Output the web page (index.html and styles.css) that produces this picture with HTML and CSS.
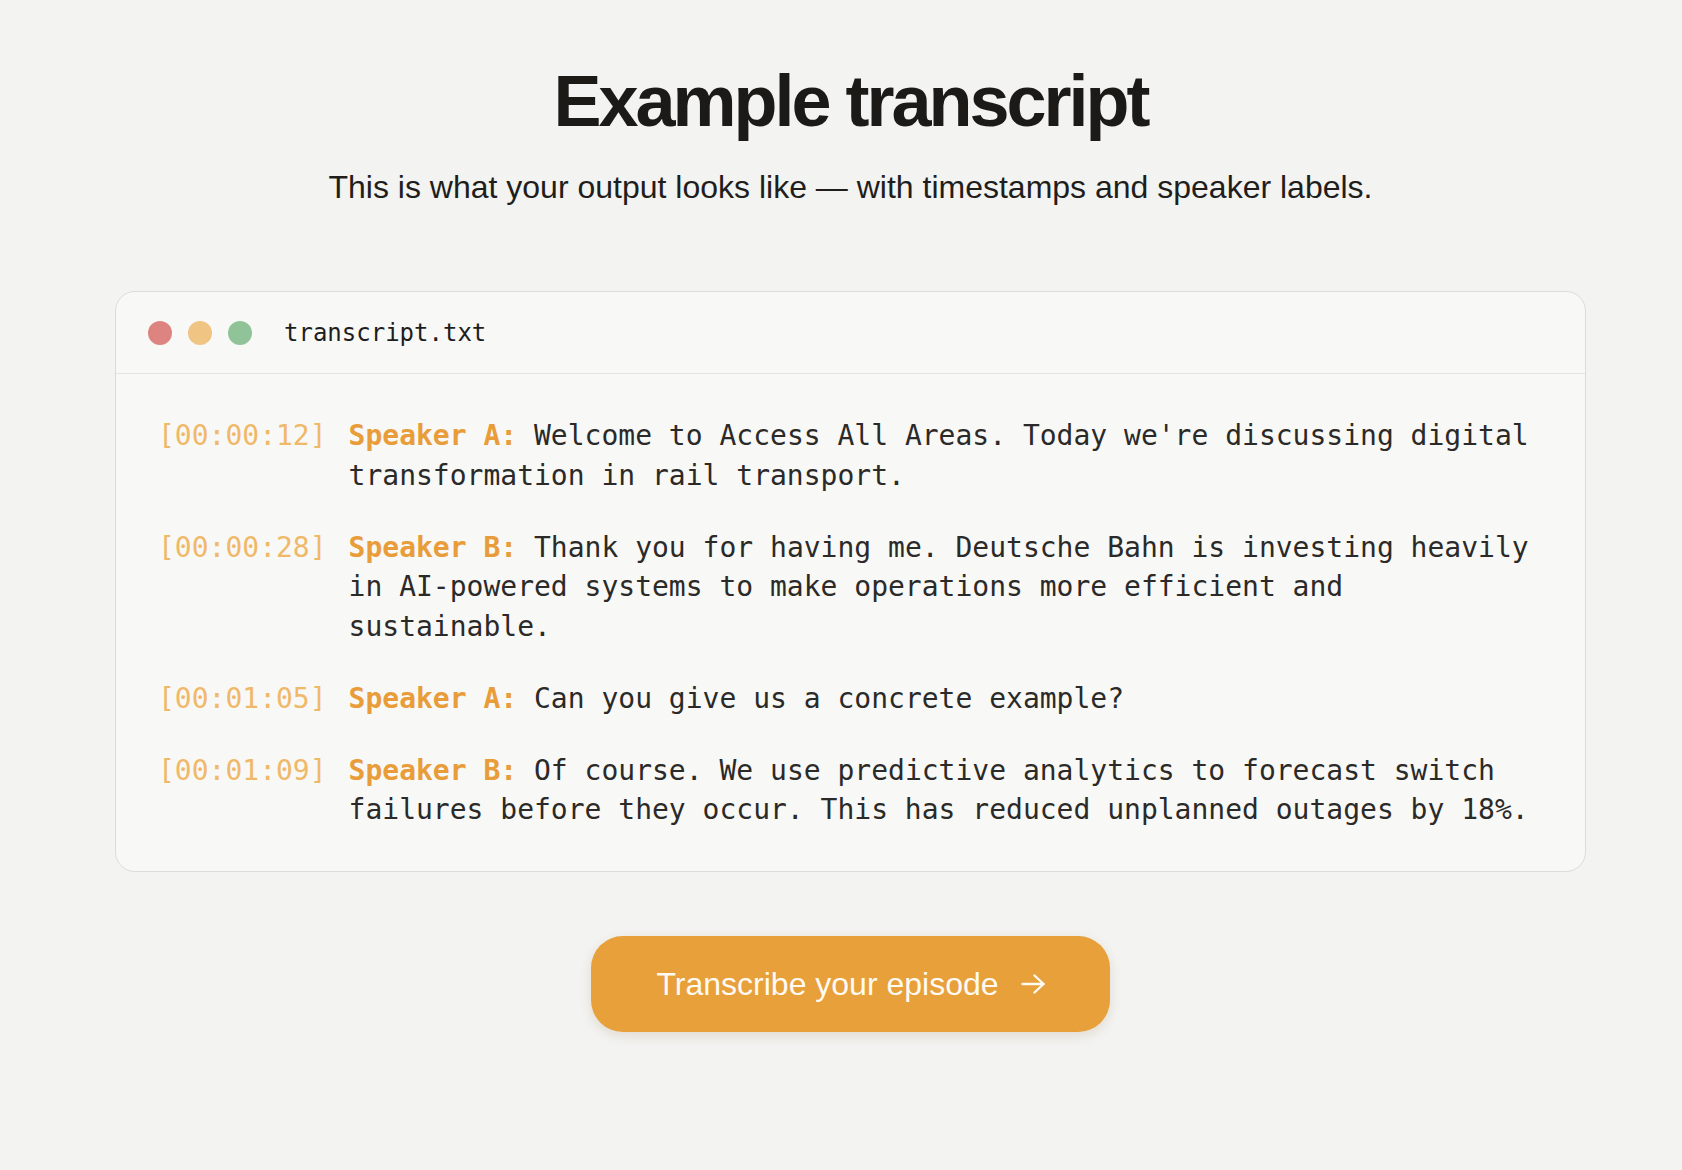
FILE: index.html
```html
<!DOCTYPE html>
<html lang="en">
<head>
<meta charset="utf-8">
<title>Example transcript</title>
<link rel="stylesheet" href="styles.css">
</head>
<body>
<main class="page">
  <h1 class="title">Example transcript</h1>
  <p class="subtitle">This is what your output looks like — with timestamps and speaker labels.</p>

  <section class="window">
    <header class="window-bar">
      <span class="dot dot-red"></span>
      <span class="dot dot-yellow"></span>
      <span class="dot dot-green"></span>
      <span class="filename">transcript.txt</span>
    </header>
    <div class="transcript">
      <div class="entry">
        <span class="time">[00:00:12]</span>
        <p class="line"><b class="speaker">Speaker A:</b> Welcome to Access All Areas. Today we're discussing digital transformation in rail transport.</p>
      </div>
      <div class="entry">
        <span class="time">[00:00:28]</span>
        <p class="line"><b class="speaker">Speaker B:</b> Thank you for having me. Deutsche Bahn is investing heavily in AI-powered systems to make operations more efficient and sustainable.</p>
      </div>
      <div class="entry">
        <span class="time">[00:01:05]</span>
        <p class="line"><b class="speaker">Speaker A:</b> Can you give us a concrete example?</p>
      </div>
      <div class="entry">
        <span class="time">[00:01:09]</span>
        <p class="line"><b class="speaker">Speaker B:</b> Of course. We use predictive analytics to forecast switch failures before they occur. This has reduced unplanned outages by 18%.</p>
      </div>
    </div>
  </section>

  <div class="cta-row">
    <a class="cta" href="#">
      <span>Transcribe your episode</span>
      <svg class="cta-arrow" width="24" height="20" viewBox="0 0 24 20" fill="none" stroke="currentColor" stroke-width="2.4" stroke-linecap="round" stroke-linejoin="round"><path d="M1.5 10h21"/><path d="M13.5 1.5l9 8.5-9 8.5"/></svg>
    </a>
  </div>
</main>
</body>
</html>
```

FILE: styles.css
```css
* { box-sizing: border-box; }

html, body {
  margin: 0;
  padding: 0;
  background: #f3f3f1;
}

body {
  font-family: "Liberation Sans", Arial, Helvetica, sans-serif;
  color: #1c1b19;
}

.page {
  padding: 62px 96px 80px 115px;
  display: flex;
  flex-direction: column;
  align-items: stretch;
}

.title {
  margin: 0;
  text-align: center;
  font-size: 72px;
  line-height: 1.1;
  font-weight: 700;
  letter-spacing: -0.042em;
  color: #1c1a17;
}

.subtitle {
  margin: 22px 0 0;
  text-align: center;
  font-size: 32px;
  line-height: 1.5;
  color: #1f1e1c;
}

.window {
  margin-top: 80px;
  background: #f8f8f6;
  border: 1px solid #dcdcd9;
  border-radius: 20px;
  overflow: hidden;
}

.window-bar {
  height: 82px;
  display: flex;
  align-items: center;
  gap: 16px;
  padding: 0 32px;
  border-bottom: 1px solid #e4e4e1;
}

.dot {
  width: 24px;
  height: 24px;
  border-radius: 50%;
  flex: none;
}
.dot-red { background: #de8480; }
.dot-yellow { background: #f0c584; }
.dot-green { background: #90c498; }

.filename {
  margin-left: 16px;
  font-family: "DejaVu Sans Mono", "Liberation Mono", monospace;
  font-size: 24px;
  color: #1e1e1e;
}

.transcript {
  padding: 42px 40px 41px 42px;
  display: flex;
  flex-direction: column;
  gap: 32px;
  font-family: "DejaVu Sans Mono", "Liberation Mono", monospace;
  font-size: 28px;
  line-height: 1.42;
  color: #2b2a28;
}

.entry {
  display: grid;
  grid-template-columns: auto 1fr;
  column-gap: 22px;
}

.time {
  color: #f0b869;
  white-space: nowrap;
}

.line {
  margin: 0;
}

.speaker {
  color: #e89d3a;
  font-weight: 700;
}

.cta-row {
  margin-top: 64px;
  display: flex;
  justify-content: center;
}

.cta {
  height: 96px;
  display: flex;
  align-items: center;
  gap: 22px;
  padding: 0 65px;
  background: #e7a03a;
  color: #fffaf2;
  text-decoration: none;
  font-size: 32px;
  border-radius: 32px;
  box-shadow: 0 4px 12px rgba(120, 80, 20, 0.14);
}

.cta-arrow {
  flex: none;
}
```
